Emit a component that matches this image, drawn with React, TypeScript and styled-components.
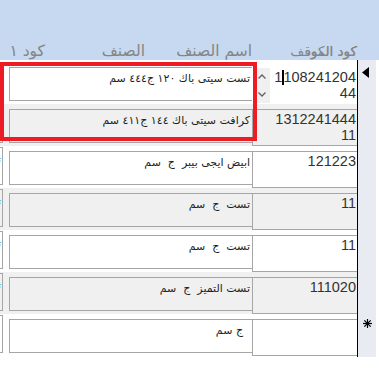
import React from 'react';
import styled, { createGlobalStyle } from 'styled-components';

const Global = createGlobalStyle`
  html, body { margin: 0; padding: 0; background: #ffffff; }
  body { font-family: "DejaVu Sans", sans-serif; }
`;

const Form = styled.div`
  position: relative;
  width: 379px;
  height: 370px;
  overflow: hidden;
  background: #ffffff;
`;

const Header = styled.div`
  height: 60px;
  box-sizing: border-box;
  background: #c6d9f0;
  display: grid;
  grid-template-columns: 45px 100px 107px 105px 1fr;
  align-items: end;
  padding-bottom: 0;
`;

const HeaderLabel = styled.div<{ $col: number; $size?: number }>`
  grid-column: ${(p) => p.$col};
  grid-row: 1;
  justify-self: end;
  direction: rtl;
  font-family: "DejaVu Sans", sans-serif;
  font-size: ${(p) => p.$size ?? 15.5}px;
  line-height: 18px;
  color: #858585;
  white-space: nowrap;
`;

const Detail = styled.div`
  display: flex;
  height: 297px;
`;

const Rows = styled.div`
  width: 357px;
  padding-top: 2px;
  box-sizing: border-box;
`;

const Row = styled.div<{ $alt: boolean }>`
  height: 42px;
  display: flex;
  align-items: flex-start;
  background: ${(p) => (p.$alt ? '#f0f0f0' : '#ffffff')};
`;

const Stub = styled.div`
  flex: none;
  width: 3px;
  height: 38px;
  margin-top: 1px;
  box-sizing: border-box;
  border: 1px solid #a6a6a6;
  border-left: none;
  overflow: hidden;
  direction: rtl;
`;

const StubText = styled.div`
  padding: 5px 1px 0 0;
  font-size: 11px;
  color: #3fa3e4;
  white-space: nowrap;
`;

const NameBox = styled.div<{ $inset?: number }>`
  flex: none;
  width: 244px;
  height: 34px;
  margin: 5px 0 0 6px;
  box-sizing: border-box;
  border: 1px solid #a6a6a6;
  direction: rtl;
  padding: 4px ${(p) => 2 + (p.$inset ?? 0)}px 0 2px;
  font-family: "DejaVu Sans", sans-serif;
  font-size: 11px;
  line-height: 14px;
  color: #1e1e1e;
  white-space: pre;
  overflow: hidden;
`;

const CodeBox = styled.div<{ $focused?: boolean }>`
  flex: none;
  display: flex;
  width: 105px;
  height: 37px;
  margin: 5px 0 0 -1px;
  box-sizing: border-box;
  border: 1px solid ${(p) => (p.$focused ? 'transparent' : '#a6a6a6')};
  border-right: none;
  background: ${(p) => (p.$focused ? '#ffffff' : 'transparent')};
`;

const ScrollBar = styled.div<{ $visible: boolean }>`
  flex: none;
  width: 17px;
  display: flex;
  flex-direction: column;
  background: ${(p) => (p.$visible ? '#f0f0f0' : 'transparent')};
  visibility: ${(p) => (p.$visible ? 'visible' : 'hidden')};
`;

const ScrollButton = styled.div`
  flex: 1;
  display: flex;
  align-items: center;
  justify-content: center;
`;

const CodeText = styled.div`
  flex: 1;
  min-width: 0;
  padding: 1px 1px 0 0;
  text-align: right;
  font-family: "Liberation Sans", Arial, sans-serif;
  font-size: 14.5px;
  line-height: 16px;
  color: #333333;
  word-break: break-all;
`;

const Caret = styled.span`
  display: inline-block;
  width: 2px;
  height: 15px;
  margin: 0 -1px 0 0;
  background: #000000;
  vertical-align: -3px;
`;

const Selector = styled.div`
  width: 19px;
  box-sizing: border-box;
  border-left: 1px solid #000000;
  background: #e8ebf2;
  padding-top: 2px;
`;

const SelCell = styled.div<{ $pad: number }>`
  height: 42px;
  box-sizing: border-box;
  padding: 5px 0 0 ${(p) => p.$pad}px;
  display: flex;
  align-items: flex-start;
`;

const Highlight = styled.div`
  position: absolute;
  left: 0;
  top: 62px;
  width: 257px;
  height: 79px;
  box-sizing: border-box;
  border: 4px solid #ed1c24;
  pointer-events: none;
`;

type Rec = { name: string; code: string; inset?: number; isNew?: boolean };

const records: Rec[] = [
  { name: 'تست سيتى باك ١٢٠ ج٤٤٤ سم', code: '110824120444' },
  { name: 'كرافت سيتى باك ١٤٤ ج٤١١ سم', code: '131224144411' },
  { name: 'ابيض ايجى بيبر  ج  سم', code: '121223' },
  { name: 'تست  ج  سم', code: '11' },
  { name: 'تست  ج  سم', code: '11' },
  { name: 'تست التميز  ج  سم', code: '111020' },
  { name: 'ج سم', code: '', inset: 7, isNew: true },
];

const Chevron = ({ up }: { up: boolean }) => (
  <svg width="8" height="5" viewBox="0 0 8 5">
    <polyline
      points={up ? '0.5,4.5 4,1 7.5,4.5' : '0.5,0.5 4,4 7.5,0.5'}
      fill="none"
      stroke="#606060"
      strokeWidth="1.3"
    />
  </svg>
);

const CurrentMark = () => (
  <svg width="7" height="11" viewBox="0 0 7 11">
    <polygon points="7,0 7,11 0,5.5" fill="#000" />
  </svg>
);

const NewMark = () => (
  <svg width="9" height="9" viewBox="0 0 9 9">
    <g stroke="#000" strokeWidth="1.2">
      <line x1="4.5" y1="0" x2="4.5" y2="9" />
      <line x1="0" y1="4.5" x2="9" y2="4.5" />
      <line x1="1.3" y1="1.3" x2="7.7" y2="7.7" />
      <line x1="7.7" y1="1.3" x2="1.3" y2="7.7" />
    </g>
  </svg>
);

export default function App() {
  return (
    <Form>
      <Global />
      <Header>
        <HeaderLabel $col={1}>كود ١</HeaderLabel>
        <HeaderLabel $col={2}>الصنف</HeaderLabel>
        <HeaderLabel $col={3}>اسم الصنف</HeaderLabel>
        <HeaderLabel $col={4} $size={13.5}>كود الموقف</HeaderLabel>
        <HeaderLabel $col={4} $size={13.5}>كود الكود</HeaderLabel>
      </Header>
      <Detail>
        <Rows>
          {records.map((r, i) => {
            const focused = i === 0;
            return (
              <Row key={i} $alt={i % 2 === 1}>
                <Stub>
                  <StubText>{r.isNew ? '' : 'تست'}</StubText>
                </Stub>
                <NameBox $inset={r.inset}>{r.name}</NameBox>
                <CodeBox $focused={focused}>
                  <ScrollBar $visible={focused}>
                    <ScrollButton>
                      <Chevron up />
                    </ScrollButton>
                    <ScrollButton>
                      <Chevron up={false} />
                    </ScrollButton>
                  </ScrollBar>
                  <CodeText>
                    {focused ? (
                      <>
                        {r.code.slice(0, 1)}
                        <Caret />
                        {r.code.slice(1)}
                      </>
                    ) : (
                      r.code
                    )}
                  </CodeText>
                </CodeBox>
              </Row>
            );
          })}
        </Rows>
        <Selector>
          {records.map((r, i) => (
            <SelCell key={i} $pad={i === 0 ? 4 : 5}>
              {i === 0 && <CurrentMark />}
              {r.isNew && <NewMark />}
            </SelCell>
          ))}
        </Selector>
      </Detail>
      <Highlight />
    </Form>
  );
}
